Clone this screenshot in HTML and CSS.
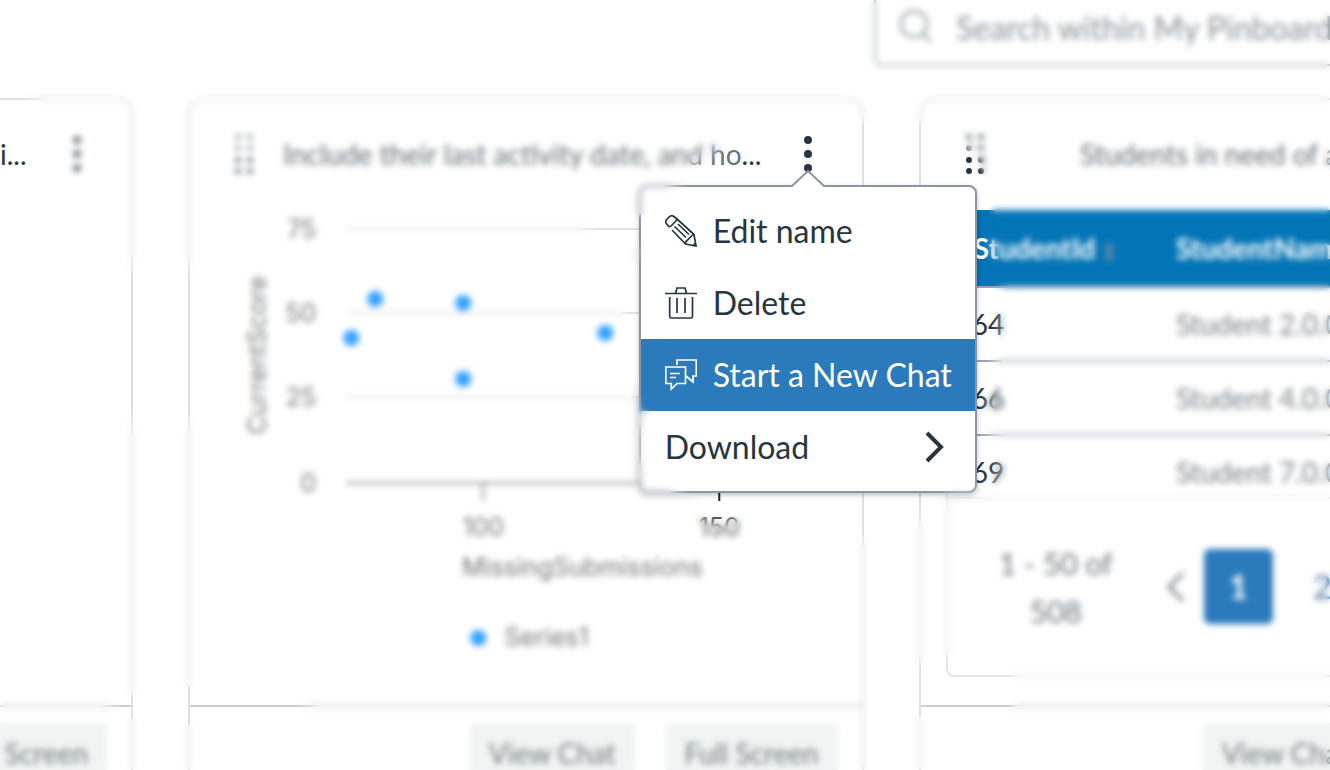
FILE: index.html
```html
<!DOCTYPE html>
<html lang="en">
<head>
<meta charset="utf-8">
<title>My Pinboard</title>
<link rel="stylesheet" href="styles.css">
</head>
<body>
<svg class="defs" aria-hidden="true">
  <symbol id="grip" viewBox="0 0 20 44">
    <g opacity=".65"><circle cx="3" cy="5" r="3"/><circle cx="15" cy="5" r="3"/>
    <circle cx="3" cy="16" r="3"/><circle cx="15" cy="16" r="3"/></g>
    <circle cx="3" cy="28" r="3"/><circle cx="15" cy="28" r="3"/>
    <circle cx="3" cy="39" r="3"/><circle cx="15" cy="39" r="3"/>
  </symbol>
  <symbol id="kebab" viewBox="0 0 34 44">
    <circle cx="17" cy="8" r="4"/><circle cx="17" cy="22" r="4"/><circle cx="17" cy="36" r="4"/>
  </symbol>
</svg>

<header class="topbar">
  <label class="search">
    <svg class="search-icon" viewBox="0 0 36 36" aria-hidden="true"><circle cx="16" cy="15" r="13"/><path d="M25 25l8 8"/></svg>
    <input type="text" aria-label="Search pinboard" placeholder="Search within My Pinboard">
  </label>
</header>

<main class="board">
  <section class="card card-start">
    <div class="card-head">
      <h2 class="card-title">i...</h2>
      <button class="kebab faded" aria-label="Options"><svg><use href="#kebab"/></svg></button>
    </div>
    <div class="card-body"></div>
    <div class="card-foot"><button class="action">Full Screen</button></div>
  </section>

  <section class="card">
    <div class="card-head">
      <svg class="grip faded"><use href="#grip"/></svg>
      <h2 class="card-title"><span class="muted">Include their last activity date, and ho</span>...</h2>
      <div class="menu-wrap">
        <button class="kebab" aria-label="Options" aria-expanded="true"><svg><use href="#kebab"/></svg></button>
        <div class="menu">
          <svg class="menu-arrow" viewBox="0 0 34 18" aria-hidden="true"><path class="arrow-fill" d="M0 18L17 1L34 18Z"/><path class="arrow-line" d="M0 16L1 16L17 1L33 16L34 16"/></svg>
          <button class="menu-item">
            <svg class="icon" viewBox="0 0 32 32"><path d="M11.500 3.500L8.500 1.300Q6.500 0 4.500 1.700L1.700 4.500Q0 6.500 1.300 8.500L3.500 11.300M3.500 11.300Q5 12 6.500 10.500L10.500 6.500Q12 5 11.500 3.500M11.500 3.500L29 19.500L31 31L20.500 29L7 15M20.500 29Q20.300 26.500 22 25.500L26 21.500Q27 20 29 19.500M9.500 11.500L21 22.500M13 9L24 19.500M28 30.500L30.500 28"/></svg>
            Edit name
          </button>
          <button class="menu-item">
            <svg class="icon" viewBox="0 0 32 32"><path d="M0 6.500H32M10.500 6.500L12 1H20L21.500 6.500M4.700 10V29.500Q4.700 31 6.200 31H26Q27.500 31 27.500 29.500V10M12 11V26M20 11V26"/></svg>
            Delete
          </button>
          <button class="menu-item selected">
            <svg class="icon" viewBox="0 0 32 32"><path d="M12 6V1H31.300V17H28V23L21 17M.8 8H20.500V24.500H12L6.300 30V24.500H.8ZM5 14.500H15M5 18.500H11"/></svg>
            Start a New Chat
          </button>
          <button class="menu-item">
            Download
            <svg class="chevron" viewBox="0 0 20 32"><path d="M2 2L16 16L2 30"/></svg>
          </button>
        </div>
      </div>
    </div>
    <div class="card-body">
      <svg class="chart" viewBox="190 176 671 529" role="img" aria-label="CurrentScore by MissingSubmissions">
        <g class="gridline"><path d="M346 229H839M346 313H839M346 397H839"/></g>
        <path class="axis" d="M346 483H839M483 483V501"/>
        <path class="axis strong" d="M719 483V501"/>
        <g class="tick-end">
          <text x="316" y="238">75</text><text x="316" y="322">50</text><text x="316" y="406">25</text><text x="316" y="492">0</text>
        </g>
        <g class="tick-mid">
          <text x="483" y="536">100</text><text class="strong-text" x="719" y="536">150</text>
          <text x="582" y="576">MissingSubmissions</text>
          <text transform="translate(266 355) rotate(-90)">CurrentScore</text>
        </g>
        <text x="504" y="646">Series1</text>
        <g class="points">
          <circle cx="375" cy="299" r="8"/><circle cx="351" cy="338" r="8"/><circle cx="463" cy="303" r="8"/>
          <circle cx="463" cy="379" r="8"/><circle cx="605" cy="333" r="8"/><circle cx="478" cy="638" r="8"/>
        </g>
      </svg>
    </div>
    <div class="card-foot"><button class="action">View Chat</button><button class="action">Full Screen</button></div>
  </section>

  <section class="card card-end">
    <div class="card-head">
      <svg class="grip"><use href="#grip"/></svg>
      <h2 class="card-title centered muted">Students in need of a</h2>
    </div>
    <div class="card-body">
      <div class="table-box">
        <div class="table-scroll">
          <table>
            <thead><tr><th>StudentId <svg class="sort" viewBox="0 0 12 24"><path d="M6 2L11 10H1ZM6 22L11 14H1Z"/></svg></th><th>StudentName</th></tr></thead>
            <tbody>
              <tr><td>64</td><td>Student 2.0.0</td></tr>
              <tr><td>66</td><td>Student 4.0.0</td></tr>
              <tr><td>69</td><td>Student 7.0.0</td></tr>
            </tbody>
          </table>
        </div>
        <nav class="pager">
          <span class="count">1 - 50 of 508</span>
          <button class="prev" aria-label="Previous"><svg viewBox="0 0 20 32"><path d="M17 2L3 16L17 30"/></svg></button>
          <button class="page current">1</button>
          <button class="page">2</button>
        </nav>
      </div>
    </div>
    <div class="card-foot foot-start"><button class="action">View Chat</button></div>
  </section>
</main>
<div class="focus-veil"></div>
</body>
</html>
```
FILE: styles.css
```css
* { box-sizing: border-box; }
body {
  margin: 0;
  height: 100vh;
  overflow: hidden;
  background: #fff;
  color: #273540;
  font-family: Lato, "Liberation Sans", sans-serif;
  font-size: 28px;
}
button { border: 0; padding: 0; background: none; color: inherit; font: inherit; }
.defs { position: absolute; width: 0; height: 0; }
.muted { color: #6b757c; }

.topbar { display: flex; justify-content: flex-end; padding-bottom: 32px; }
.search {
  display: flex;
  align-items: center;
  gap: 22px;
  width: 456px;
  height: 66px;
  padding: 0 0 10px 22px;
  border: solid #a9b2ba;
  border-width: 0 0 2px 2px;
  border-radius: 0 0 0 8px;
}
.search-icon { flex: none; width: 36px; height: 36px; fill: none; stroke: #a0a8ac; stroke-width: 3; }
.search input { flex: 1; min-width: 0; padding: 0; border: 0; outline: 0; background: none; font: inherit; font-size: 32px; }
.search input::placeholder { color: #8d979f; opacity: 1; }

.board { display: grid; grid-template-columns: 133fr 675fr 411fr; gap: 55px; }
.card { min-width: 0; border: 2px solid #dddfe0; border-radius: 16px; }
.card-start { border-left: 0; border-top-left-radius: 0; }
.card-end { border-right: 0; border-top-right-radius: 0; }
.card-head { display: flex; align-items: center; height: 76px; padding: 32px 37px 0 45px; }
.card-start .card-head { padding-left: 0; }
.grip { flex: none; width: 20px; height: 44px; fill: #273540; }
.card-title { flex: 1; min-width: 0; margin: 0 0 0 28px; font-size: 28px; line-height: 44px; font-weight: 400; white-space: nowrap; }
.card-start .card-title { margin: 0; }
.card-title.centered { margin-left: 94px; }
.card-end .card-head { padding-right: 0; }
.menu-wrap { position: relative; z-index: 2; }
.kebab, .kebab svg { display: block; width: 34px; height: 44px; fill: #273540; }
.faded, .faded svg { fill: #737c83; }
.card-body { height: 529px; }
.card-foot { display: flex; justify-content: flex-end; gap: 31px; padding: 16px 24px; border-top: 2px solid #c7cdd1; overflow: hidden; }
.foot-start { justify-content: flex-start; padding-left: 282px; padding-right: 0; }
.action { flex: none; height: 60px; padding: 0 19px; border-radius: 6px; background: #f2f4f4; color: #757e84; white-space: nowrap; }

.menu {
  position: absolute;
  top: 53px;
  left: -152px;
  width: 338px;
  padding: 8px 0;
  border: 2px solid #8b95a3;
  border-radius: 8px;
  background: #fff;
  box-shadow: 0 2px 5px rgba(0, 0, 0, .25);
}
.menu-arrow { position: absolute; top: -17px; left: 150px; width: 34px; height: 18px; }
.arrow-fill { fill: #fff; }
.arrow-line { fill: none; stroke: #8b95a3; stroke-width: 2; }
.menu-item { display: flex; align-items: center; gap: 16px; width: 100%; height: 72px; padding: 0 24px; font-size: 32px; line-height: 40px; text-align: left; white-space: nowrap; }
.menu-item.selected { background: #2b7abc; color: #fff; }
.icon { flex: none; width: 32px; height: 32px; fill: none; stroke: currentColor; stroke-width: 1.7; }
.chevron { width: 20px; height: 32px; margin-left: auto; margin-right: 6px; fill: none; stroke: currentColor; stroke-width: 4; }

.chart { display: block; width: 100%; height: 529px; font-family: Inter, sans-serif; font-size: 25px; fill: #7d7d7d; }
.gridline { stroke: #e2e2e2; stroke-width: 2; }
.axis { fill: none; stroke: #8a8a8a; stroke-width: 2; }
.axis.strong { stroke: #222; }
.strong-text { fill: #555; }
.tick-end { text-anchor: end; }
.tick-mid { text-anchor: middle; }
.points { fill: #36a2ff; }

.card-end .card-body { padding: 34px 0 0 25px; }
.table-box { height: 467px; border: 2px solid #e2e4e6; border-width: 0 0 2px 2px; border-radius: 0 0 0 8px; overflow: hidden; }
.table-scroll { height: 289px; overflow: hidden; border-bottom: 2px solid #e8eaec; }
table { width: 100%; border-collapse: collapse; table-layout: fixed; }
th, td { height: 74px; padding: 0 0 0 26px; border-bottom: 2px solid #9aa3af; text-align: left; font-weight: 400; white-space: nowrap; overflow: hidden; }
td:first-child { padding-left: 24px; }
td + td { color: #7d868c; }
th { height: 77px; background: #0374b5; color: #fff; font-weight: 700; }
th:first-child { width: 202px; }
.sort { width: 14px; height: 24px; fill: #8b95a3; vertical-align: middle; }
.pager { display: flex; align-items: center; height: 175px; }
.count { flex: none; width: 124px; margin-left: 46px; color: #737c83; font-size: 30px; line-height: 48px; text-align: center; }
.prev { flex: none; width: 20px; height: 32px; margin: 0 18px 0 48px; }
.prev svg { display: block; width: 20px; height: 32px; fill: none; stroke: #737c83; stroke-width: 3; }
.page { flex: none; width: 69px; height: 75px; margin-right: 15px; border-radius: 6px; color: #5379a8; font-size: 32px; }
.page.current { background: #2b7abc; color: #fff; font-weight: 700; }

/* Softens everything outside the areas in focus. */
.focus-veil {
  position: fixed;
  inset: 0;
  z-index: 3;
  pointer-events: none;
  backdrop-filter: blur(3px);
  mask-image:
    radial-gradient(188px 190px at 815px 310px, transparent 95%, #000 104%),
    radial-gradient(146px 150px at 845px 395px, transparent 92%, #000 104%),
    radial-gradient(122px 66px at 760px 445px, transparent 92%, #000 104%),
    radial-gradient(84px 90px at 910px 210px, transparent 92%, #000 104%),
    radial-gradient(50px 60px at 970px 460px, transparent 40%, #000 80%),
    radial-gradient(50px 110px at 670px 330px, transparent 80%, #000),
    radial-gradient(70px 20px at 645px 232px, transparent 70%, #000),
    radial-gradient(24px 46px at 862px 160px, transparent 70%, #000),
    radial-gradient(30px 20px at 719px 508px, transparent 50%, #000),
    radial-gradient(60px 105px at 160px 345px, transparent 80%, #000),
    radial-gradient(110px 22px at 210px 706px, transparent 80%, #000),
    radial-gradient(66px 40px at 960px 690px, transparent 80%, #000),
    radial-gradient(60px 80px at 0 150px, transparent 70%, #000);
  mask-composite: intersect;
}
```
